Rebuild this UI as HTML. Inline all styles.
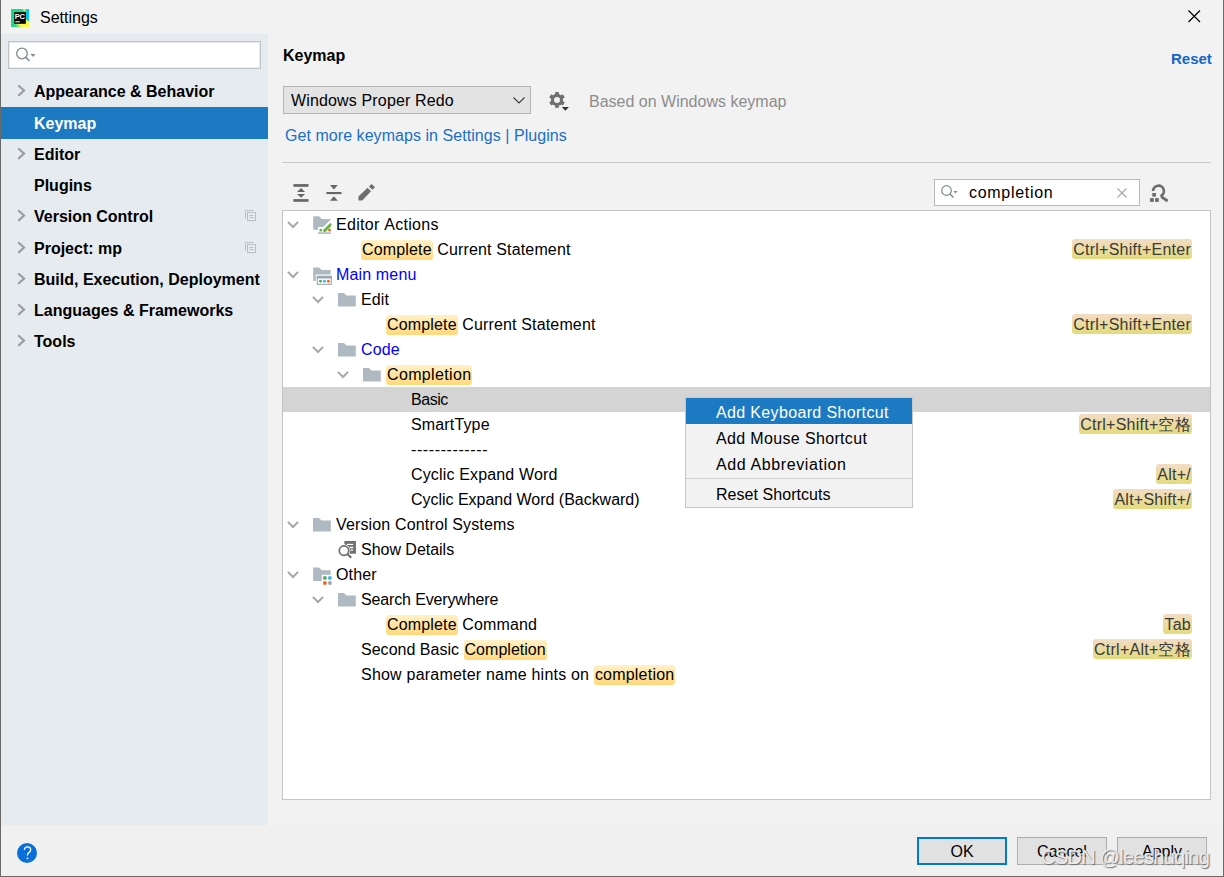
<!DOCTYPE html>
<html><head><meta charset="utf-8">
<style>
*{margin:0;padding:0;box-sizing:border-box}
html,body{width:1224px;height:877px;overflow:hidden}
body{position:relative;background:#f2f2f2;font-family:"Liberation Sans",sans-serif;font-size:16px;color:#000}
.a{position:absolute;white-space:nowrap}
.t{position:absolute;white-space:nowrap;line-height:25px;height:25px}
.sb{position:absolute;left:34px;font-weight:bold;font-size:16px;line-height:31px;height:31px;white-space:nowrap}
svg{position:absolute;overflow:visible}
.hl{display:inline-block;height:20px;line-height:20px;background:linear-gradient(#fff1c8,#ffd87c);border-radius:3px;padding:0 1px}
.sc{position:absolute;white-space:nowrap;line-height:22px;height:20px;padding:0 1px;color:#3a3a3a;letter-spacing:0.25px;background:linear-gradient(#f3dcc4,#e3db7c);border-radius:3px}
.blue{color:#0000ff}
</style></head><body>
<div class="a" style="left:0;top:0;width:1px;height:877px;background:#6a6a6a"></div>
<div class="a" style="left:1223px;top:0;width:1px;height:877px;background:#6a6a6a"></div>
<div class="a" style="left:0;top:876px;width:1224px;height:1px;background:#6a6a6a"></div>
<svg style="left:11px;top:9px" width="18" height="18" viewBox="0 0 18 18">
<defs><linearGradient id="pcy" x1="0" y1="1" x2="1" y2="0.6"><stop offset="0.25" stop-color="#21d789"/><stop offset="0.55" stop-color="#fcf84a"/></linearGradient></defs>
<rect width="18" height="18" fill="#21d789"/>
<path d="M14.5 2 L18 0 V12.5 L14.5 10 Z" fill="#07c3f2"/>
<path d="M11.5 0 H15.5 L13.5 3.2 Z" fill="#b8ee50"/>
<path d="M0 18 L0 14 L14.5 10 L18 12.5 V18 Z" fill="url(#pcy)"/>
<rect x="3.2" y="3.2" width="11.6" height="11.6" fill="#000"/>
<text x="3.7" y="9.9" font-family="Liberation Sans" font-weight="bold" font-size="7.6" letter-spacing="-0.3" fill="#fff">PC</text>
<rect x="4.3" y="12.2" width="4.6" height="1.2" fill="#ddd"/>
</svg>
<div class="a" style="left:40px;top:7px;font-size:16px;line-height:22px">Settings</div>
<svg style="left:1188px;top:10px" width="13" height="13" viewBox="0 0 13 13"><path d="M0.5 0.5 L12 12 M12 0.5 L0.5 12" stroke="#000" stroke-width="1.2"/></svg>
<div class="a" style="left:1px;top:34px;width:267px;height:791px;background:#e6ebf0"></div>
<div class="a" style="left:8px;top:41px;width:253px;height:28px;background:#fff;border:1px solid #c0c3c6;box-shadow:inset 0 0 0 0.5px #d8dadc"></div>
<svg style="left:15px;top:46px" width="22" height="18" viewBox="0 0 22 18">
<circle cx="7" cy="7.5" r="5.3" fill="none" stroke="#7f8b91" stroke-width="1.3"/>
<path d="M10.8 11.3 L14.5 15" stroke="#7f8b91" stroke-width="1.6"/>
<path d="M15.5 8 L20.5 8 L18 11 Z" fill="#7f8b91"/>
</svg>
<div class="a" style="left:1px;top:107px;width:267px;height:32px;background:#1c7ac3"></div>
<div class="sb" style="top:76px;color:#000">Appearance &amp; Behavior</div>
<svg style="left:17px;top:85px" width="9" height="12" viewBox="0 0 9 12"><path d="M1.9 1 L7 5.5 L1.9 10.3" fill="none" stroke="#999da1" stroke-width="2.2" stroke-linecap="round"/></svg>
<div class="sb" style="top:108px;color:#fff">Keymap</div>
<div class="sb" style="top:139px;color:#000">Editor</div>
<svg style="left:17px;top:148px" width="9" height="12" viewBox="0 0 9 12"><path d="M1.9 1 L7 5.5 L1.9 10.3" fill="none" stroke="#999da1" stroke-width="2.2" stroke-linecap="round"/></svg>
<div class="sb" style="top:170px;color:#000">Plugins</div>
<div class="sb" style="top:201px;color:#000">Version Control</div>
<svg style="left:17px;top:210px" width="9" height="12" viewBox="0 0 9 12"><path d="M1.9 1 L7 5.5 L1.9 10.3" fill="none" stroke="#999da1" stroke-width="2.2" stroke-linecap="round"/></svg>
<svg style="left:245px;top:210px" width="12" height="12" viewBox="0 0 12 12"><path d="M0.5 8.5 V0.5 H8.5" fill="none" stroke="#b9bfc6"/><rect x="2.5" y="2.5" width="8" height="8" fill="none" stroke="#b9bfc6"/><path d="M4.5 5.5 H8.5 M4.5 7.5 H8.5" stroke="#b9bfc6"/></svg>
<div class="sb" style="top:233px;color:#000">Project: mp</div>
<svg style="left:17px;top:242px" width="9" height="12" viewBox="0 0 9 12"><path d="M1.9 1 L7 5.5 L1.9 10.3" fill="none" stroke="#999da1" stroke-width="2.2" stroke-linecap="round"/></svg>
<svg style="left:245px;top:242px" width="12" height="12" viewBox="0 0 12 12"><path d="M0.5 8.5 V0.5 H8.5" fill="none" stroke="#b9bfc6"/><rect x="2.5" y="2.5" width="8" height="8" fill="none" stroke="#b9bfc6"/><path d="M4.5 5.5 H8.5 M4.5 7.5 H8.5" stroke="#b9bfc6"/></svg>
<div class="sb" style="top:264px;color:#000">Build, Execution, Deployment</div>
<svg style="left:17px;top:273px" width="9" height="12" viewBox="0 0 9 12"><path d="M1.9 1 L7 5.5 L1.9 10.3" fill="none" stroke="#999da1" stroke-width="2.2" stroke-linecap="round"/></svg>
<div class="sb" style="top:295px;color:#000">Languages &amp; Frameworks</div>
<svg style="left:17px;top:304px" width="9" height="12" viewBox="0 0 9 12"><path d="M1.9 1 L7 5.5 L1.9 10.3" fill="none" stroke="#999da1" stroke-width="2.2" stroke-linecap="round"/></svg>
<div class="sb" style="top:326px;color:#000">Tools</div>
<svg style="left:17px;top:335px" width="9" height="12" viewBox="0 0 9 12"><path d="M1.9 1 L7 5.5 L1.9 10.3" fill="none" stroke="#999da1" stroke-width="2.2" stroke-linecap="round"/></svg>
<div class="a" style="left:1px;top:825px;width:1222px;height:51px;background:#f0f0f0"></div>
<svg style="left:17px;top:843px" width="20" height="20" viewBox="0 0 20 20"><circle cx="10" cy="10" r="10" fill="#0a6fd8"/><path d="M7.4 7 Q7.4 3.8 10.5 3.8 Q13.7 3.8 13.7 6.8 Q13.7 8.6 11.6 9.9 Q10.5 10.6 10.5 12.6" fill="none" stroke="#fff" stroke-width="1.3"/><circle cx="10.5" cy="15.3" r="0.9" fill="#fff"/></svg>
<div class="a" style="left:283px;top:45px;font-weight:bold;font-size:16px;line-height:22px">Keymap</div>
<div class="a" style="left:1171px;top:48px;font-weight:bold;font-size:15px;line-height:22px;color:#1068c8">Reset</div>
<div class="a" style="left:283px;top:86px;width:248px;height:28px;background:#e3e3e3;border:1px solid #b5b5b5"></div>
<div class="a" style="left:291px;top:90px;font-size:16px;line-height:22px;letter-spacing:0.15px">Windows Proper Redo</div>
<svg style="left:513px;top:97px" width="12" height="7" viewBox="0 0 12 7"><path d="M0.5 0.5 L6 6 L11.5 0.5" fill="none" stroke="#3c3c3c" stroke-width="1.1"/></svg>
<svg style="left:549px;top:92px" width="21" height="20" viewBox="0 0 21 20">
<g transform="translate(8,7.9)" fill="#707070">
<circle r="6.1"/>
<rect id="tooth" x="-1.85" y="-7.9" width="3.7" height="3"/>
<use href="#tooth" transform="rotate(60)"/><use href="#tooth" transform="rotate(120)"/><use href="#tooth" transform="rotate(180)"/><use href="#tooth" transform="rotate(240)"/><use href="#tooth" transform="rotate(300)"/>
<circle r="3" fill="#f2f2f2"/>
</g>
<path d="M12.8 15.1 L19.9 15.1 L16.35 18.8 Z" fill="#333"/>
</svg>
<div class="a" style="left:589px;top:91px;font-size:16px;line-height:22px;color:#8c8c8c">Based on Windows keymap</div>
<div class="a" style="left:285px;top:125px;font-size:16px;line-height:22px;color:#1a6fc4;letter-spacing:0.05px">Get more keymaps in Settings | Plugins</div>
<div class="a" style="left:282px;top:162px;width:929px;height:1px;background:#c9c9c9"></div>
<svg style="left:293px;top:184px" width="16" height="18" viewBox="0 0 16 18" fill="#666">
<rect x="0.4" y="0.1" width="15.1" height="2.7"/><rect x="0.4" y="15.1" width="15.1" height="2.7"/>
<path d="M8.05 4.1 L12.1 8 L4 8 Z"/><path d="M8.05 13.8 L12.1 10 L4 10 Z"/>
</svg>
<svg style="left:326px;top:184px" width="16" height="18" viewBox="0 0 16 18" fill="#666">
<path d="M4 1.1 L11.8 1.1 L7.9 5.6 Z"/><rect x="0.4" y="8" width="15.1" height="2.1"/><path d="M4 16.8 L11.8 16.8 L7.9 12.2 Z"/>
</svg>
<svg style="left:354px;top:180px" width="26" height="26" viewBox="0 0 26 26" fill="#6e6e6e">
<path d="M4.45 16.6 L13.5 7.8 L17 11.3 L8.3 20.5 L4.45 20.5 Z"/><path d="M15 6.5 L17.6 3.9 L21 7.2 L18.4 9.8 Z"/>
</svg>
<div class="a" style="left:934px;top:179px;width:206px;height:27px;background:#fff;border:1px solid #b9b9b9"></div>
<svg style="left:940px;top:184px" width="18" height="16" viewBox="0 0 18 16">
<circle cx="6.5" cy="6.5" r="4.8" fill="none" stroke="#7f8b91" stroke-width="1.2"/>
<path d="M10 10 L13.5 13.5" stroke="#7f8b91" stroke-width="1.5"/>
<path d="M13.5 7 L17.5 7 L15.5 9.5 Z" fill="#7f8b91"/>
</svg>
<div class="a" style="left:969px;top:182px;font-size:16px;line-height:22px;letter-spacing:0.7px">completion</div>
<svg style="left:1117px;top:188px" width="10" height="10" viewBox="0 0 10 10"><path d="M0.5 0.5 L9.5 9.5 M9.5 0.5 L0.5 9.5" stroke="#a8a8a8" stroke-width="1.1"/></svg>
<svg style="left:1144px;top:180px" width="26" height="26" viewBox="0 0 26 26" fill="#6b6b6b">
<path d="M9.1 11 A5.4 5.4 0 1 1 16.4 16.1" fill="none" stroke="#6b6b6b" stroke-width="2.6"/>
<path d="M17.2 16.6 L23.6 21" stroke="#6b6b6b" stroke-width="2.8"/>
<rect x="6.1" y="18.1" width="3.7" height="3.8"/><rect x="11.1" y="18.1" width="3.7" height="3.8"/><rect x="8.3" y="13" width="3.7" height="3.6"/>
</svg>
<div class="a" style="left:282px;top:210px;width:929px;height:590px;background:#fff;border:1px solid #c4c4c4"></div>
<div class="a" style="left:283px;top:387px;width:927px;height:25px;background:#d4d4d4"></div>
<svg style="left:287px;top:221px" width="12" height="8" viewBox="0 0 12 8"><path d="M0.9 0.9 L6 6 L11.1 0.9" fill="none" stroke="#a6a6a6" stroke-width="2"/></svg>
<svg style="left:313px;top:216px" width="20" height="20" viewBox="0 0 20 20">
<path d="M0.2 0.15 H6 L8.7 3 H17.8 V3.6 L10.4 11 H5 V13.7 H0.2 Z" fill="#afb9c1"/>
<path d="M17.2 6.6 L18.8 8.2 L18 9 L16.4 7.4 Z" fill="#9aa7b0"/>
<path d="M11.6 14.6 L17 9.2" stroke="#62b543" stroke-width="2.9" stroke-linecap="round"/>
<circle cx="7.8" cy="14.2" r="1.35" fill="#62b543"/><circle cx="16.5" cy="14" r="1.5" fill="#f26522"/>
<rect x="5" y="16.3" width="12.9" height="1.6" fill="#afb9c1"/>
</svg>
<div class="t" style="left:336px;top:212px;letter-spacing:0.29px">Editor&nbsp;Actions</div>
<div class="t" style="left:361px;top:237px;letter-spacing:0.15px"><span class="hl">Complete</span>&nbsp;Current&nbsp;Statement</div>
<div class="sc" style="right:32px;top:239px">Ctrl+Shift+Enter</div>
<svg style="left:287px;top:271px" width="12" height="8" viewBox="0 0 12 8"><path d="M0.9 0.9 L6 6 L11.1 0.9" fill="none" stroke="#a6a6a6" stroke-width="2"/></svg>
<svg style="left:313px;top:267px" width="20" height="20" viewBox="0 0 20 20">
<path d="M0.2 0.4 H6 L8.7 3.1 H17.6 V7.6 H2.75 V13.9 H0.2 Z" fill="#afb9c1"/>
<rect x="4.3" y="9.4" width="14" height="7.9" fill="#fff" stroke="#9aa7b0" stroke-width="1.1"/>
<rect x="3.8" y="8.9" width="15" height="2.6" fill="#9aa7b0"/>
<circle cx="7.5" cy="14.2" r="1.45" fill="#59a869"/><circle cx="11.5" cy="14.2" r="1.45" fill="#40b6e0"/><circle cx="15.4" cy="14.2" r="1.45" fill="#f26522"/>
</svg>
<div class="t" style="left:336px;top:262px;letter-spacing:0.15px"><span class="blue">Main menu</span></div>
<svg style="left:312px;top:296px" width="12" height="8" viewBox="0 0 12 8"><path d="M0.9 0.9 L6 6 L11.1 0.9" fill="none" stroke="#a6a6a6" stroke-width="2"/></svg>
<svg style="left:338px;top:292.5px" width="18" height="14" viewBox="0 0 18 14"><path d="M0 0 H6 L8.5 2.6 H17.8 V13.5 H0 Z" fill="#afb9c1"/></svg>
<div class="t" style="left:361px;top:287px;letter-spacing:0.15px">Edit</div>
<div class="t" style="left:386px;top:312px;letter-spacing:0.15px"><span class="hl">Complete</span>&nbsp;Current&nbsp;Statement</div>
<div class="sc" style="right:32px;top:314px">Ctrl+Shift+Enter</div>
<svg style="left:312px;top:346px" width="12" height="8" viewBox="0 0 12 8"><path d="M0.9 0.9 L6 6 L11.1 0.9" fill="none" stroke="#a6a6a6" stroke-width="2"/></svg>
<svg style="left:338px;top:342.5px" width="18" height="14" viewBox="0 0 18 14"><path d="M0 0 H6 L8.5 2.6 H17.8 V13.5 H0 Z" fill="#afb9c1"/></svg>
<div class="t" style="left:361px;top:337px;letter-spacing:0.15px"><span class="blue">Code</span></div>
<svg style="left:337px;top:371px" width="12" height="8" viewBox="0 0 12 8"><path d="M0.9 0.9 L6 6 L11.1 0.9" fill="none" stroke="#a6a6a6" stroke-width="2"/></svg>
<svg style="left:363px;top:367.5px" width="18" height="14" viewBox="0 0 18 14"><path d="M0 0 H6 L8.5 2.6 H17.8 V13.5 H0 Z" fill="#afb9c1"/></svg>
<div class="t" style="left:386px;top:362px;letter-spacing:0.35px"><span class="hl">Completion</span></div>
<div class="t" style="left:411px;top:387px;letter-spacing:-0.45px">Basic</div>
<div class="t" style="left:411px;top:412px;letter-spacing:0.15px">SmartType</div>
<div class="sc" style="right:32px;top:414px">Ctrl+Shift+空格</div>
<div class="t" style="left:411px;top:437px;letter-spacing:0.15px"><span style="letter-spacing:0.6px">-------------</span></div>
<div class="t" style="left:411px;top:462px;letter-spacing:0.15px">Cyclic&nbsp;Expand&nbsp;Word</div>
<div class="sc" style="right:32px;top:464px">Alt+/</div>
<div class="t" style="left:411px;top:487px;letter-spacing:-0.02px">Cyclic&nbsp;Expand&nbsp;Word&nbsp;(Backward)</div>
<div class="sc" style="right:32px;top:489px">Alt+Shift+/</div>
<svg style="left:287px;top:521px" width="12" height="8" viewBox="0 0 12 8"><path d="M0.9 0.9 L6 6 L11.1 0.9" fill="none" stroke="#a6a6a6" stroke-width="2"/></svg>
<svg style="left:313px;top:517.5px" width="18" height="14" viewBox="0 0 18 14"><path d="M0 0 H6 L8.5 2.6 H17.8 V13.5 H0 Z" fill="#afb9c1"/></svg>
<div class="t" style="left:336px;top:512px;letter-spacing:0.15px">Version&nbsp;Control&nbsp;Systems</div>
<svg style="left:334px;top:538px" width="26" height="24" viewBox="0 0 26 24">
<rect x="10.4" y="3" width="11.5" height="12.7" fill="#6e6e6e"/>
<rect x="13" y="5.8" width="6.2" height="1.2" fill="#fff"/><rect x="16" y="8.7" width="3.2" height="1.5" fill="#fff"/><rect x="16.5" y="11.4" width="2.7" height="1.2" fill="#fff"/>
<circle cx="10" cy="12.6" r="6.3" fill="#fff"/>
<circle cx="10" cy="12.6" r="4.75" fill="none" stroke="#6e6e6e" stroke-width="1.7"/>
<path d="M13.6 16.2 L17.3 19.7" stroke="#6e6e6e" stroke-width="2.1"/>
</svg>
<div class="t" style="left:361px;top:537px;letter-spacing:-0.02px">Show&nbsp;Details</div>
<svg style="left:287px;top:571px" width="12" height="8" viewBox="0 0 12 8"><path d="M0.9 0.9 L6 6 L11.1 0.9" fill="none" stroke="#a6a6a6" stroke-width="2"/></svg>
<svg style="left:313px;top:567px" width="20" height="20" viewBox="0 0 20 20">
<path d="M0.1 0.4 H6 L8.7 3.2 H17.65 V7.7 H8.8 V13.9 H0.1 Z" fill="#afb9c1"/>
<circle cx="11.9" cy="10.9" r="1.95" fill="#59a869"/><circle cx="16.9" cy="10.9" r="1.95" fill="#40b6e0"/>
<circle cx="11.9" cy="16" r="1.95" fill="#f26522"/><circle cx="16.9" cy="16" r="1.95" fill="#9aa7b0"/>
</svg>
<div class="t" style="left:336px;top:562px;letter-spacing:0.15px">Other</div>
<svg style="left:312px;top:596px" width="12" height="8" viewBox="0 0 12 8"><path d="M0.9 0.9 L6 6 L11.1 0.9" fill="none" stroke="#a6a6a6" stroke-width="2"/></svg>
<svg style="left:338px;top:592.5px" width="18" height="14" viewBox="0 0 18 14"><path d="M0 0 H6 L8.5 2.6 H17.8 V13.5 H0 Z" fill="#afb9c1"/></svg>
<div class="t" style="left:361px;top:587px;letter-spacing:-0.14px">Search&nbsp;Everywhere</div>
<div class="t" style="left:386px;top:612px;letter-spacing:0.15px"><span class="hl">Complete</span>&nbsp;Command</div>
<div class="sc" style="right:32px;top:614px">Tab</div>
<div class="t" style="left:361px;top:637px;letter-spacing:0.02px">Second&nbsp;Basic&nbsp;<span class="hl">Completion</span></div>
<div class="sc" style="right:32px;top:639px">Ctrl+Alt+空格</div>
<div class="t" style="left:361px;top:662px;letter-spacing:0.21px">Show&nbsp;parameter&nbsp;name&nbsp;hints&nbsp;on&nbsp;<span class="hl">completion</span></div>
<div class="a" style="left:685px;top:397px;width:228px;height:111px;background:#f2f2f2;border:1px solid #c6c6c6"></div>
<div class="a" style="left:686px;top:398px;width:226px;height:26px;background:#1c7ac3"></div>
<div class="a" style="left:686px;top:478px;width:226px;height:1px;background:#d0d0d0"></div>
<div class="a" style="left:716px;top:400px;line-height:25px;font-size:16px;color:#fff;letter-spacing:0.35px">Add Keyboard Shortcut</div>
<div class="a" style="left:716px;top:426px;line-height:25px;font-size:16px;color:#000;letter-spacing:0.35px">Add Mouse Shortcut</div>
<div class="a" style="left:716px;top:452px;line-height:25px;font-size:16px;color:#000;letter-spacing:0.6px">Add Abbreviation</div>
<div class="a" style="left:716px;top:482px;line-height:25px;font-size:16px;color:#000;letter-spacing:0.05px">Reset Shortcuts</div>
<div class="a" style="left:917px;top:837px;width:90px;height:28px;background:#e1e1e1;border:2px solid #0078d7;text-align:center;line-height:25px;font-size:16px">OK</div>
<div class="a" style="left:1017px;top:837px;width:90px;height:28px;background:#e1e1e1;border:1px solid #adadad;text-align:center;line-height:27px;font-size:16px">Cancel</div>
<div class="a" style="left:1117px;top:837px;width:90px;height:28px;background:#e1e1e1;border:1px solid #adadad;text-align:center;line-height:27px;font-size:16px">Apply</div>
<div class="a" style="left:1041px;top:845px;font-size:20px;line-height:24px;letter-spacing:-0.7px;color:#ebebeb;text-shadow:1px 1px 1px #6f6f6f">CSDN @leeshuqing</div>
</body></html>
